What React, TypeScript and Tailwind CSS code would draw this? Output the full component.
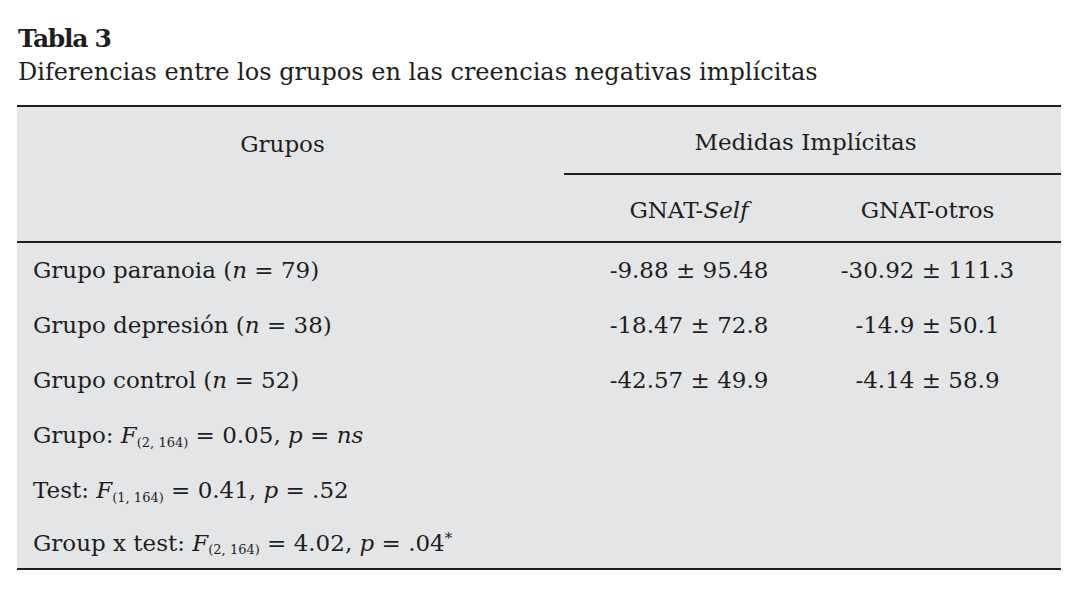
const rows = [
  { label: <>Grupo paranoia (<i>n</i> = 79)</>, self: '-9.88 ± 95.48', otros: '-30.92 ± 111.3' },
  { label: <>Grupo depresión (<i>n</i> = 38)</>, self: '-18.47 ± 72.8', otros: '-14.9 ± 50.1' },
  { label: <>Grupo control (<i>n</i> = 52)</>, self: '-42.57 ± 49.9', otros: '-4.14 ± 58.9' },
  {
    label: (
      <>
        Grupo: <i>F</i>
        <sub className="text-[13px]">(2, 164)</sub> = 0.05, <i>p</i> = <i>ns</i>
      </>
    ),
  },
  {
    label: (
      <>
        Test: <i>F</i>
        <sub className="text-[13px]">(1, 164)</sub> = 0.41, <i>p</i> = .52
      </>
    ),
  },
  {
    label: (
      <>
        Group x test: <i>F</i>
        <sub className="text-[13px]">(2, 164)</sub> = 4.02, <i>p</i> = .04<sup className="text-[15px]">*</sup>
      </>
    ),
  },
];

export default function App() {
  return (
    <div className="w-[1079px] h-[591px] bg-white text-[#1e1e1e] font-['DejaVu_Serif',serif] pt-[23px]">
      <div className="pl-[18px]">
        <h1 className="text-[25px] leading-[32px] font-bold tracking-[-1.3px]">Tabla 3</h1>
        <p className="text-[24px] leading-[34px]">Diferencias entre los grupos en las creencias negativas implícitas</p>
      </div>

      <div className="ml-[17px] mt-[16px] w-[1044px] bg-[#e4e5e7] border-t-2 border-b-2 border-[#1e1e1e] text-[23px]">
        {/* header */}
        <div className="grid grid-cols-[547px_250px_1fr] border-b-2 border-[#1e1e1e]">
          <div className="row-span-2 text-center pt-[20px] pr-[16px]">Grupos</div>
          <div className="col-span-2 h-[68px] flex items-center justify-center pt-[4px] pr-[14px] border-b-2 border-[#1e1e1e]">
            Medidas Implícitas
          </div>
          <div className="h-[66px] flex items-center justify-center pt-[4px]">
            GNAT-<i>Self</i>
          </div>
          <div className="h-[66px] flex items-center justify-center pt-[4px] pr-[20px]">GNAT-otros</div>
        </div>

        {/* body */}
        {rows.map((r, i) => (
          <div key={i} className="grid grid-cols-[547px_250px_1fr] h-[55px] last:h-[50px] items-center">
            <div className="pl-[16px]">{r.label}</div>
            <div className="text-center">{r.self}</div>
            <div className="text-center pr-[20px]">{r.otros}</div>
          </div>
        ))}
      </div>
    </div>
  );
}
